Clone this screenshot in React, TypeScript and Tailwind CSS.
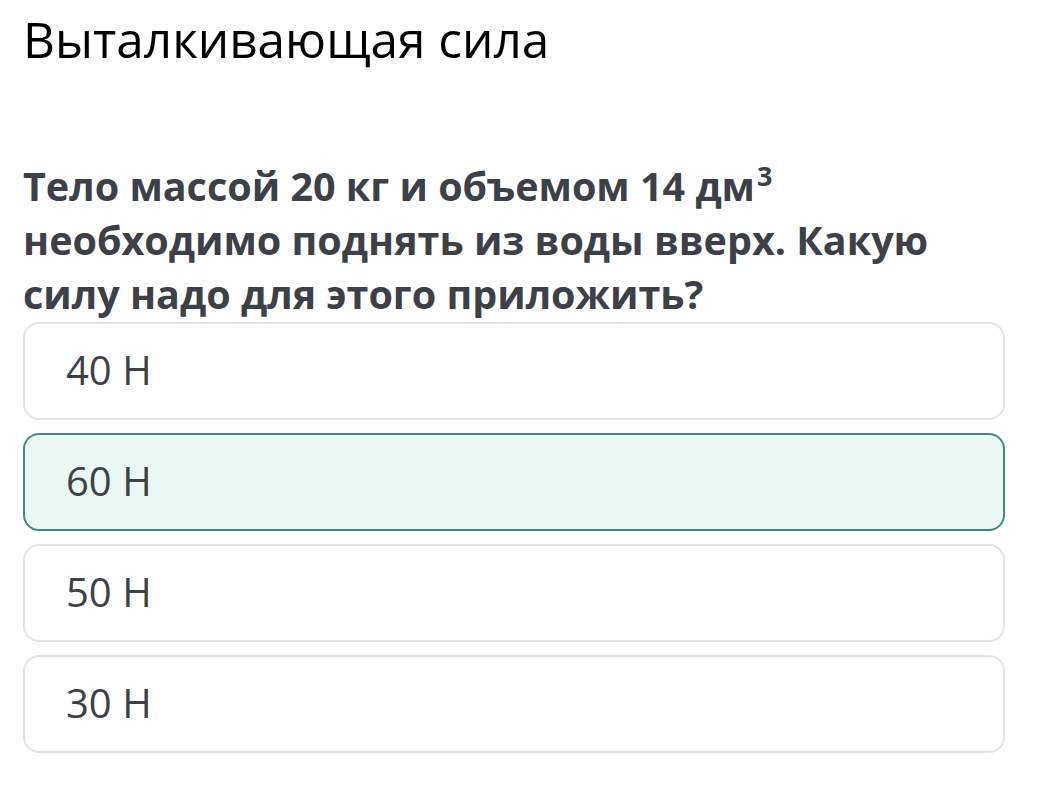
const options = [
  { label: "40 H", selected: false },
  { label: "60 H", selected: true },
  { label: "50 H", selected: false },
  { label: "30 H", selected: false },
];

export default function App() {
  return (
    <main
      className="w-[1053px] h-[801px] bg-white overflow-hidden px-[23px]"
      style={{ fontFamily: '"Open Sans", "Noto Sans", sans-serif' }}
    >
      <h1 className="text-[49.5px] leading-[60px] text-black pt-[9px] whitespace-nowrap">Выталкивающая сила</h1>

      <p className="mt-[90px] text-[39.5px] leading-[54px] font-bold text-[#3c4048] whitespace-nowrap">
        Тело массой 20 кг и объемом 14 дм
        <span className="text-[27px] font-bold align-[15px] leading-none ml-[2px]">3</span>
        <br />
        необходимо поднять из воды вверх. Какую
        <br />
        силу надо для этого приложить?
      </p>

      <div className="flex flex-col gap-[13px] w-[982px] mt-[1px]">
        {options.map((opt) => (
          <div
            key={opt.label}
            className={
              opt.selected
                ? "h-[98px] rounded-[16px] border-2 border-[#3f8a86] bg-[#ebf8f3] flex items-center pl-[41px]"
                : "h-[98px] rounded-[16px] border-2 border-[#e4e4e4] bg-white flex items-center pl-[41px]"
            }
          >
            <span className="text-[40px] text-[#3d4248] leading-none pb-[3px]">{opt.label}</span>
          </div>
        ))}
      </div>
    </main>
  );
}
